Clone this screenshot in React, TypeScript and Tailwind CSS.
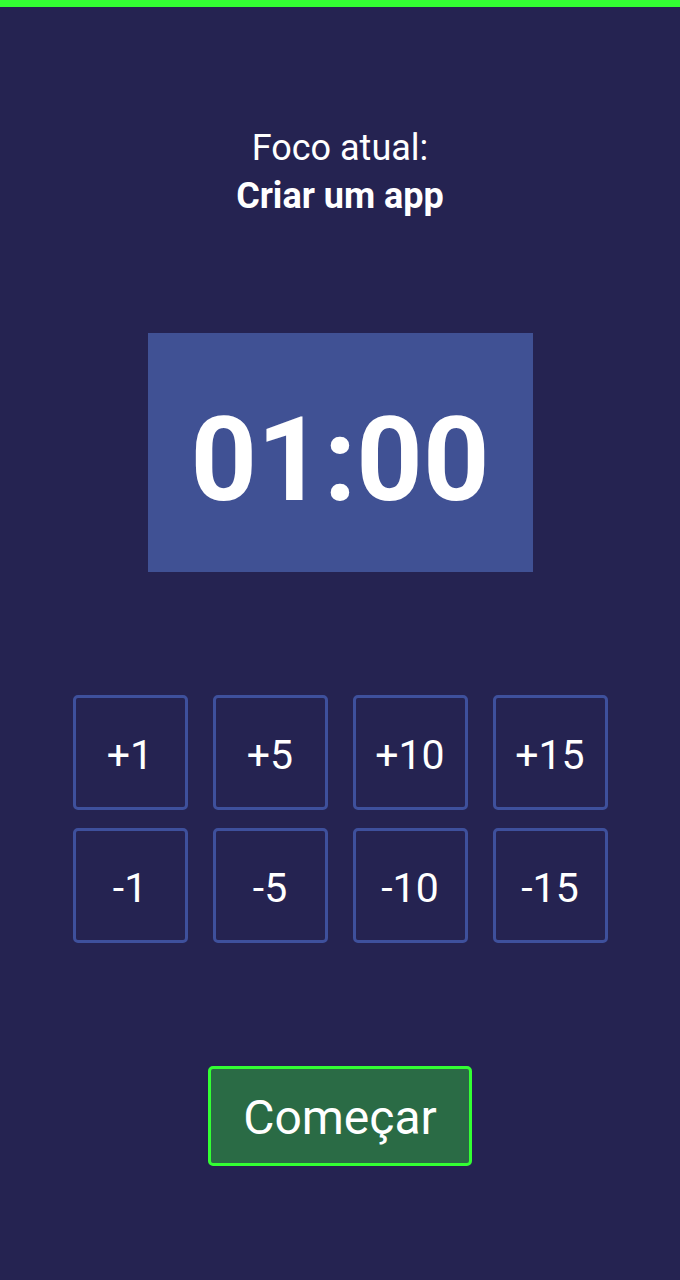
const increments = ['+1', '+5', '+10', '+15'];
const decrements = ['-1', '-5', '-10', '-15'];

const StepButton = ({ label }: { label: string }) => (
  <button className="w-[115px] h-[115px] rounded-[5px] border-[3px] border-[#3e509c] flex items-center justify-center text-[41px] text-white leading-none pt-[6px]">
    {label}
  </button>
);

export default function App() {
  return (
    <div
      className="w-[680px] h-[1280px] bg-[#252351] flex flex-col items-center"
      style={{ fontFamily: 'Roboto, "Liberation Sans", sans-serif' }}
    >
      <div className="w-full h-[7px] bg-[#33ff33]" />

      <div className="mt-[117px] flex flex-col items-center text-white text-[36px] leading-[48px]">
        <span>Foco atual:</span>
        <span className="font-bold">Criar um app</span>
      </div>

      <div className="mt-[113px] w-[385px] h-[239px] bg-[#405194] flex items-center justify-center pt-[14px]">
        <span className="text-white font-bold text-[116px] leading-none">01:00</span>
      </div>

      <div className="mt-[123px] flex flex-col gap-[18px]">
        <div className="flex gap-[25px]">
          {increments.map((v) => (
            <StepButton key={v} label={v} />
          ))}
        </div>
        <div className="flex gap-[25px]">
          {decrements.map((v) => (
            <StepButton key={v} label={v} />
          ))}
        </div>
      </div>

      <button className="mt-[123px] w-[264px] h-[100px] rounded-[5px] border-[3px] border-[#33ff33] bg-[#2a6b45] text-white text-[48px] leading-none pt-[4px]">
        Começar
      </button>
    </div>
  );
}
